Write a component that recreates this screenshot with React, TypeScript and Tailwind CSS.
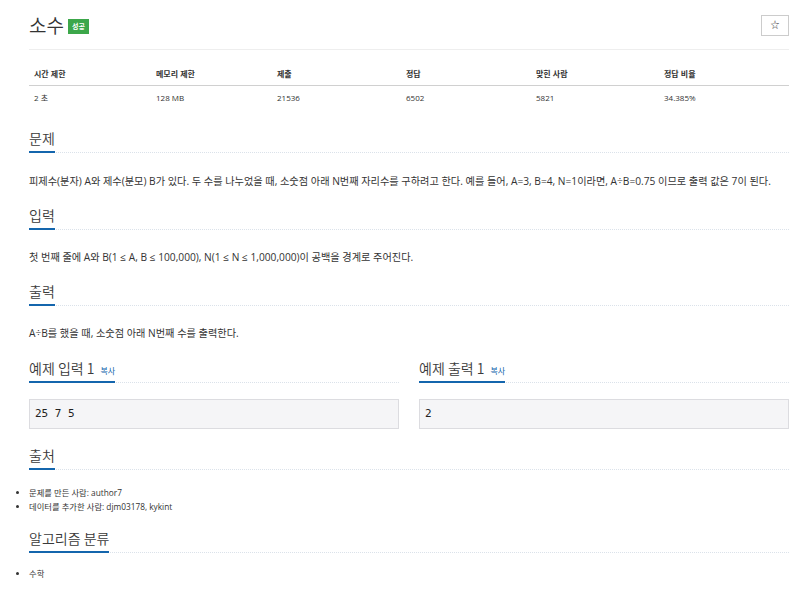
import React from "react";

const font = { fontFamily: '"Open Sans", "Noto Sans CJK KR", sans-serif' };
const headFont = { fontFamily: '"Noto Sans CJK KR", "Open Sans", sans-serif' };

function Heading({ children, extra }: { children: React.ReactNode; extra?: React.ReactNode }) {
  return (
    <div className="flex border-b border-dotted border-[#dbe2ea]">
      <div className="flex items-baseline gap-[6px] border-b-2 border-[#1466ad] -mb-px pb-[3px]">
        <span className="text-[14px] leading-[20px] text-[#3a3a3a] font-[350]" style={headFont}>{children}</span>
        {extra}
      </div>
    </div>
  );
}

export default function App() {
  const heads = ["시간 제한", "메모리 제한", "제출", "정답", "맞힌 사람", "정답 비율"];
  const vals = ["2 초", "128 MB", "21536", "6502", "5821", "34.385%"];
  return (
    <div className="bg-white w-[803px] h-[596px] overflow-hidden pl-[29px] pr-[14px] text-[#333]" style={font}>
      <div className="flex justify-between items-center pt-[13px] pb-[12px] border-b border-[#eee]">
        <div className="flex items-center gap-[4px]">
          <span className="text-[19px] leading-[24px] text-[#333] font-[350]" style={headFont}>소수</span>
          <span className="bg-[#3ca74a] text-white text-[7px] font-bold leading-[15px] px-[4px] mt-[3px]">성공</span>
        </div>
        <div className="w-[28px] h-[21px] border border-[#ccc] flex items-center justify-center text-[9px] text-[#333]">☆</div>
      </div>

      <div className="mt-[13px] grid grid-cols-[122px_121px_129px_130px_128px_130px] text-[8px]">
        {heads.map((h) => (
          <div key={h} className="font-bold pl-[5px] h-[23px] flex items-center border-b border-[#d0d0d0]">{h}</div>
        ))}
        {vals.map((v) => (
          <div key={v} className="pl-[5px] h-[24px] flex items-center">{v}</div>
        ))}
      </div>

      <div className="mt-[18px]">
        <Heading>문제</Heading>
        <p className="text-[10.2px] leading-[14px] mt-[21px]">피제수(분자) A와 제수(분모) B가 있다. 두 수를 나누었을 때, 소숫점 아래 N번째 자리수를 구하려고 한다. 예를 들어, A=3, B=4, N=1이라면, A÷B=0.75 이므로 출력 값은 7이 된다.</p>
      </div>

      <div className="mt-[17px]">
        <Heading>입력</Heading>
        <p className="text-[10.2px] leading-[14px] mt-[20px]">첫 번째 줄에 A와 B(1 ≤ A, B ≤ 100,000), N(1 ≤ N ≤ 1,000,000)이 공백을 경계로 주어진다.</p>
      </div>

      <div className="mt-[17px]">
        <Heading>출력</Heading>
        <p className="text-[10.2px] leading-[14px] mt-[20px]">A÷B를 했을 때, 소숫점 아래 N번째 수를 출력한다.</p>
      </div>

      <div className="mt-[18px] grid grid-cols-2 gap-[20px]">
        {[
          ["예제 입력 1", "25 7 5"],
          ["예제 출력 1", "2"],
        ].map(([t, v]) => (
          <div key={t}>
            <Heading extra={<span className="text-[8px] text-[#1466ad]">복사</span>}>{t}</Heading>
            <div className="mt-[16px] h-[30px] bg-[#f5f5f7] border border-[#dcdce0] flex items-center px-[5px] text-[11px] whitespace-pre text-[#222]" style={{ fontFamily: '"DejaVu Sans Mono", monospace' }}>{v}</div>
          </div>
        ))}
      </div>

      <div className="mt-[16px]">
        <Heading>출처</Heading>
        <ul className="list-disc mt-[16px] text-[8.3px] leading-[14px]">
          <li>문제를 만든 사람: author7</li>
          <li>데이터를 추가한 사람: djm03178, kykint</li>
        </ul>
      </div>

      <div className="mt-[14px]">
        <Heading>알고리즘 분류</Heading>
        <ul className="list-disc mt-[14px] text-[8.3px] leading-[14px]">
          <li>수학</li>
        </ul>
      </div>
    </div>
  );
}
